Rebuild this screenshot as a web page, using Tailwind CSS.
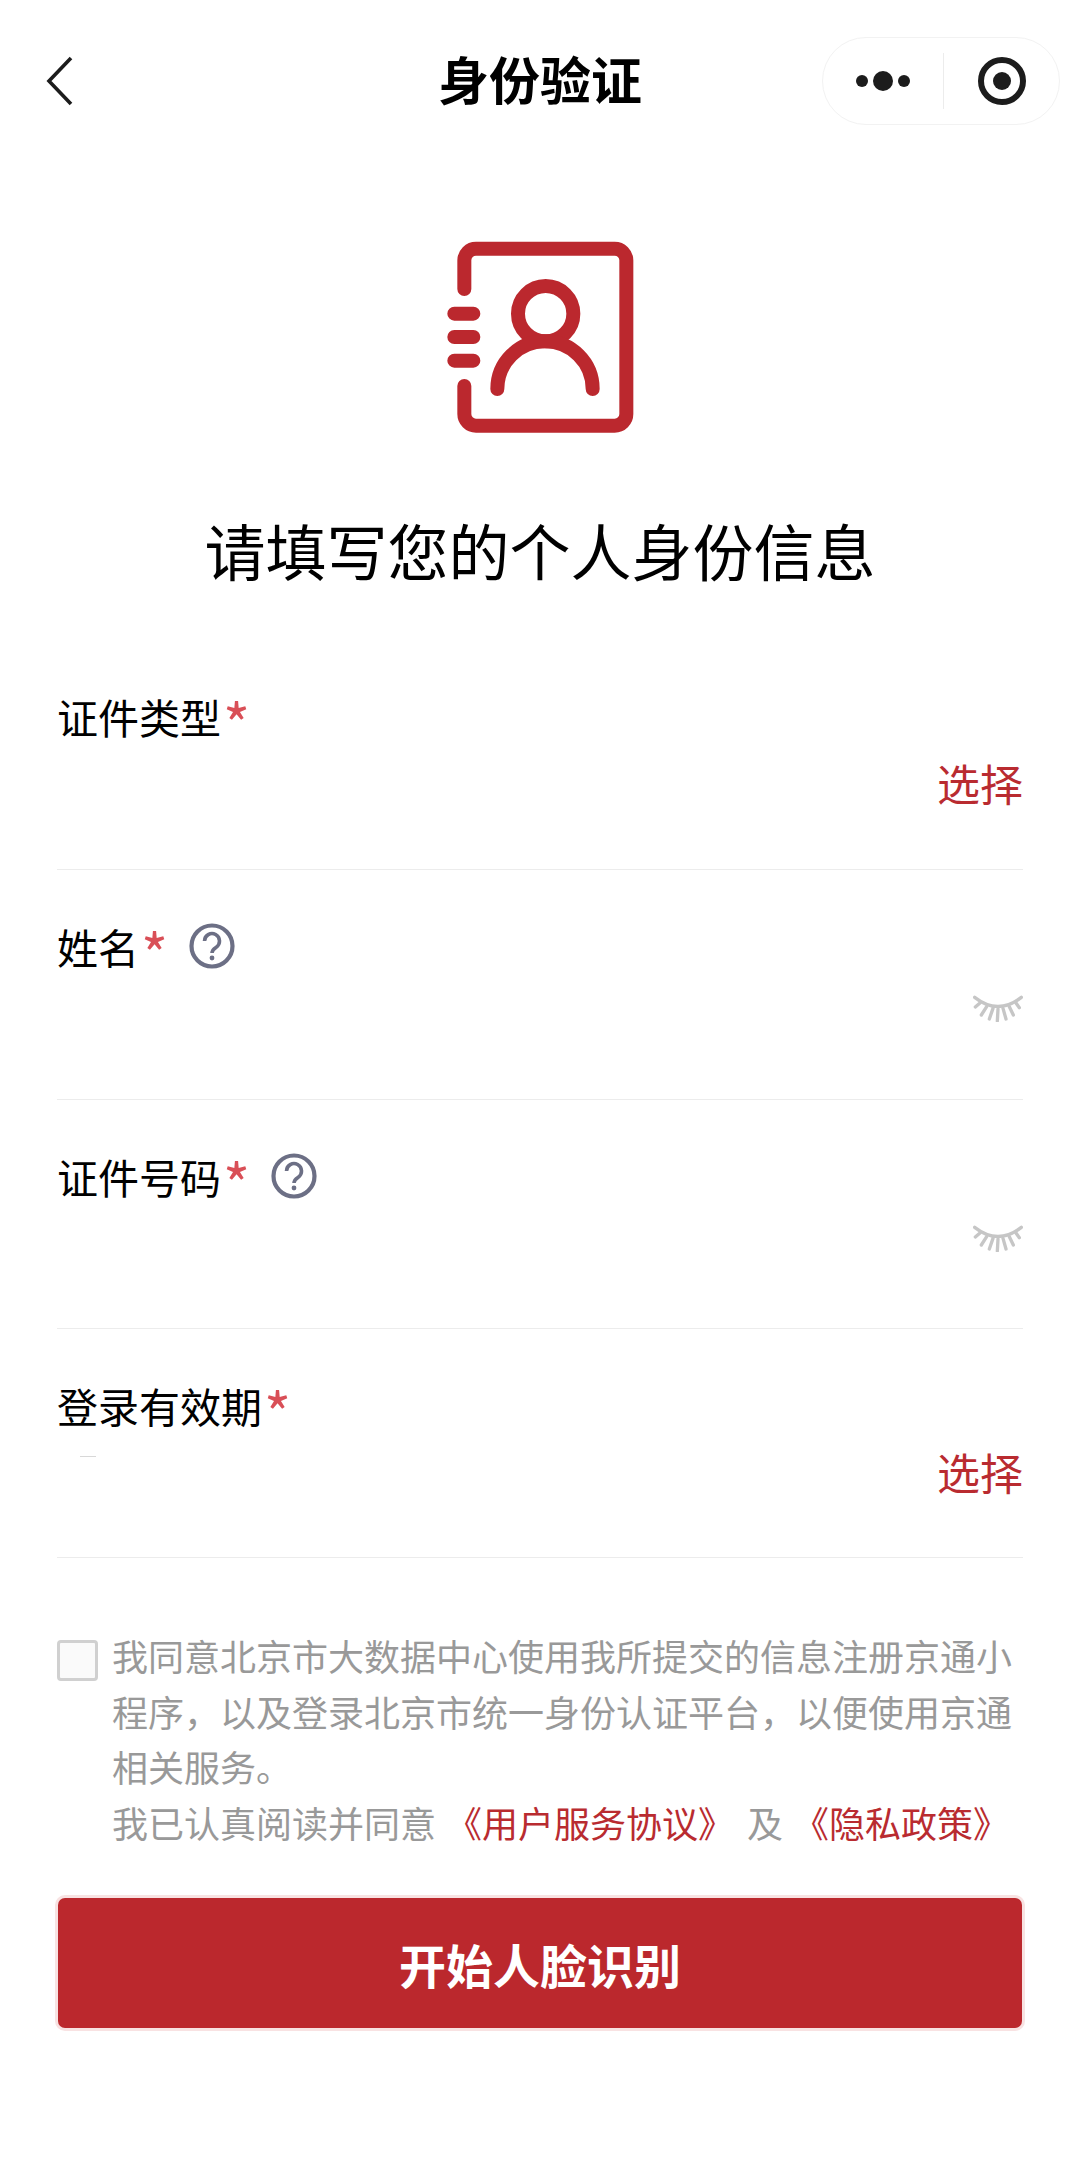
<!DOCTYPE html>
<html lang="zh-CN">
<head>
<meta charset="utf-8">
<title>身份验证</title>
<script src="https://cdn.jsdelivr.net/npm/@tailwindcss/browser@4"></script>
</head>
<body class="bg-white">
<div class="w-[1080px] h-[2175px] overflow-hidden bg-white text-black font-['Noto_Sans_CJK_SC',sans-serif]">
  <!-- nav -->
  <div class="pt-[37px] h-[162px] grid grid-cols-3">
    <div class="h-[88px] flex items-center pl-[46px]">
      <svg width="28" height="50" viewBox="0 0 28 50" fill="none"><path d="M25 2 L3 25 L25 48" stroke="#1c1c1c" stroke-width="3.6"/></svg>
    </div>
    <div class="h-[88px] pb-[5px] flex items-center justify-center text-[51px] font-bold leading-none">身份验证</div>
    <div class="h-[88px] flex justify-end pr-[20px]">
      <div class="w-[238px] h-[88px] rounded-[44px] border border-[#f2f2f2] flex items-center">
        <svg class="ml-[33px]" width="56" height="24" viewBox="0 0 56 24"><circle cx="6" cy="12" r="6" fill="#1c1c1c"/><circle cx="27" cy="12" r="10" fill="#1c1c1c"/><circle cx="48" cy="12" r="6" fill="#1c1c1c"/></svg>
        <div class="ml-[31px] w-px h-[56px] bg-[#ececec]"></div>
        <svg class="ml-[34px]" width="48" height="48" viewBox="0 0 48 48" fill="none"><circle cx="24" cy="24" r="21" stroke="#1c1c1c" stroke-width="6"/><circle cx="24" cy="24" r="9" fill="#1c1c1c"/></svg>
      </div>
    </div>
  </div>
  <!-- icon -->
  <div class="mt-[48px] flex justify-center">
    <svg width="280" height="240" viewBox="0 0 840 720" fill="none" stroke="#bb282e" stroke-width="42" stroke-linecap="round">
      <path d="M193 237 V151 a35 35 0 0 1 35 -35 H644 a35 35 0 0 1 35 35 V612 a35 35 0 0 1 -35 35 H228 a35 35 0 0 1 -35 -35 V528"/>
      <path d="M163 311 H220 M163 381 H220 M163 452 H220"/>
      <circle cx="437" cy="311" r="83"/>
      <path d="M292 537 a143 143 0 0 1 286 0"/>
    </svg>
  </div>
  <!-- heading -->
  <h1 class="mt-[59px] h-[80px] flex items-center justify-center text-[61px] font-normal leading-none">请填写您的个人身份信息</h1>
  <!-- form -->
  <div class="mx-[57px] mt-[51px]">
    <div class="h-[230px] border-b border-[#ececec]">
      <div class="pt-[50px] flex items-center h-[102px] text-[41px] leading-none">证件类型<span class="ml-[2px] w-[22px] h-[41px] overflow-visible text-[58px] leading-[52px] text-[#d94f57]">*</span></div>
      <div class="mt-[19px] text-right text-[43px] leading-none text-[#b92b30]">选择</div>
    </div>
    <div class="h-[230px] border-b border-[#ececec]">
      <div class="pt-[50px] flex items-center h-[102px] text-[41px] leading-none">姓名<span class="ml-[2px] w-[22px] h-[41px] overflow-visible text-[58px] leading-[52px] text-[#d94f57]">*</span>
        <svg class="ml-[26px]" width="46" height="46" viewBox="0 0 46 46" fill="none"><circle cx="23" cy="23" r="20.5" stroke="#6c6f85" stroke-width="4.2"/><path d="M15.5 18 a7.5 7.5 0 1 1 11.5 6.4 c-2.6 1.7 -4 2.6 -4 5.6" stroke="#6c6f85" stroke-width="3.6"/><circle cx="23" cy="35" r="2.4" fill="#6c6f85"/></svg>
      </div>
      <div class="mt-[22px] flex justify-end">
        <svg width="50" height="28" viewBox="105 95 150 84" fill="none" stroke="#c6c6c6" stroke-width="10" stroke-linecap="round"><path d="M110 105 Q180 160 250 105"/><path d="M126 122 L112 134 M146 133 L130 158 M165 138 L154 170 M180 140 L178 176 M195 138 L204 170 M214 133 L226 158 M234 122 L244 136"/></svg>
      </div>
    </div>
    <div class="h-[229px] border-b border-[#ececec]">
      <div class="pt-[50px] flex items-center h-[102px] text-[41px] leading-none">证件号码<span class="ml-[2px] w-[22px] h-[41px] overflow-visible text-[58px] leading-[52px] text-[#d94f57]">*</span>
        <svg class="ml-[26px]" width="46" height="46" viewBox="0 0 46 46" fill="none"><circle cx="23" cy="23" r="20.5" stroke="#6c6f85" stroke-width="4.2"/><path d="M15.5 18 a7.5 7.5 0 1 1 11.5 6.4 c-2.6 1.7 -4 2.6 -4 5.6" stroke="#6c6f85" stroke-width="3.6"/><circle cx="23" cy="35" r="2.4" fill="#6c6f85"/></svg>
      </div>
      <div class="mt-[22px] flex justify-end">
        <svg width="50" height="28" viewBox="105 95 150 84" fill="none" stroke="#c6c6c6" stroke-width="10" stroke-linecap="round"><path d="M110 105 Q180 160 250 105"/><path d="M126 122 L112 134 M146 133 L130 158 M165 138 L154 170 M180 140 L178 176 M195 138 L204 170 M214 133 L226 158 M234 122 L244 136"/></svg>
      </div>
    </div>
    <div class="h-[229px] border-b border-[#ececec]">
      <div class="pt-[50px] flex items-center h-[102px] text-[41px] leading-none">登录有效期<span class="ml-[2px] w-[22px] h-[41px] overflow-visible text-[58px] leading-[52px] text-[#d94f57]">*</span></div>
      <div class="mt-[19px] flex justify-between items-start">
        <div class="ml-[23px] mt-[6px] w-[16px] h-px bg-[#d8d8d8]"></div>
        <div class="text-[43px] leading-none text-[#b92b30]">选择</div>
      </div>
    </div>
  </div>
  <!-- agreement -->
  <div class="mx-[57px] mt-[70px] flex">
    <div class="mt-[12px] w-[41px] h-[41px] shrink-0 rounded-[4px] border-[3px] border-[#d0d0d0] bg-[#fafafa]"></div>
    <div class="ml-[14px] text-[36px] leading-[55.5px] text-[#999999]">
      <p>我同意北京市大数据中心使用我所提交的信息注册京通小程序，以及登录北京市统一身份认证平台，以便使用京通相关服务。</p>
      <p>我已认真阅读并同意<span class="ml-[10px] text-[#b92b30]">《用户服务协议》</span><span class="ml-[13px]">及</span><span class="ml-[10px] text-[#b92b30]">《隐私政策》</span></p>
    </div>
  </div>
  <!-- button -->
  <div class="mx-[58px] mt-[48px] h-[130px] rounded-[7px] bg-[#bb282d] ring-[3px] ring-[#f8e2e2] flex items-center justify-center text-white text-[47px] font-bold leading-none">开始人脸识别</div>
</div>
</body>
</html>
